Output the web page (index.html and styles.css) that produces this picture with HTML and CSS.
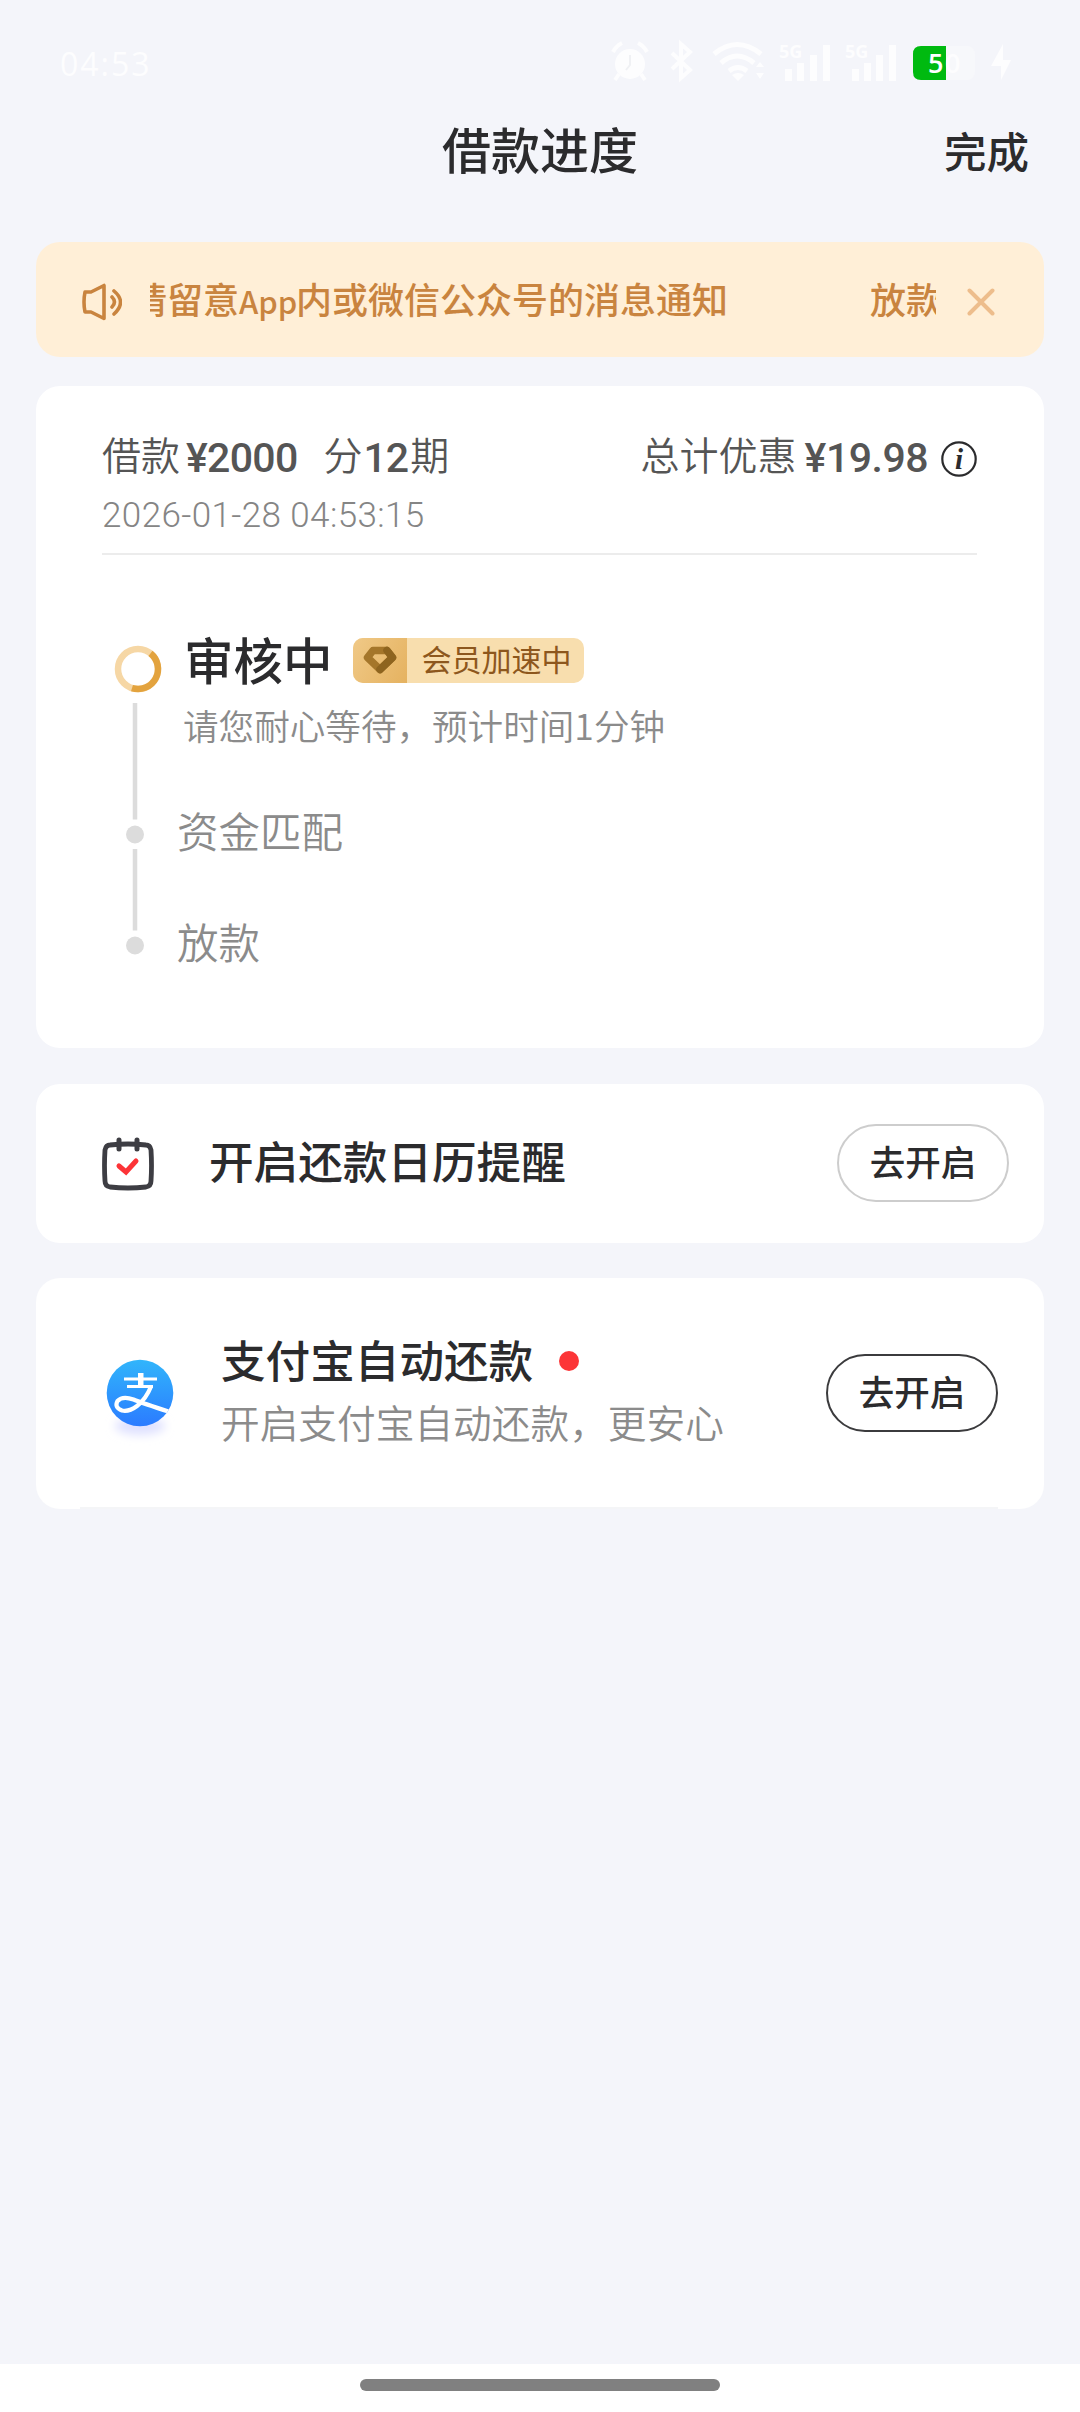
FILE: index.html
```html
<!DOCTYPE html>
<html lang="zh-CN">
<head>
<meta charset="utf-8">
<title>借款进度</title>
<link rel="stylesheet" href="styles.css">
</head>
<body>
<div class="screen">
  <div class="status">
    <span class="clock">04:53</span>
    <svg class="status-icons" width="420" height="48" viewBox="0 0 420 48" fill="#fdfdfe">
      <circle cx="20" cy="26" r="15"/>
      <path d="M9 36l-4 6M31 36l4 6M3 14q3-6 9-9M37 14q-3-6-9-9" stroke="#fdfdfe" stroke-width="4" fill="none"/>
      <path d="M20 17v10l-4 5" stroke="#f0f1f4" stroke-width="2" fill="none"/>
      <path d="M62 15l18 17-9 8V6l9 8-18 17" stroke="#fdfdfe" stroke-width="4" fill="none"/>
      <path d="M104 16q23-19 47 0M111 25q16-14 33 0M119 33q9-7 18 0" stroke="#fdfdfe" stroke-width="5" fill="none"/>
      <path d="M128 43l-6-6q6-4 12 0zM146 29l4-5 4 5zM146 35l4 6 4-6z"/>
      <path d="M175 31h7v12h-7zM187 25h7v18h-7zM200 17h7v26h-7zM213 7h7v36h-7zM242 31h7v12h-7zM254 25h7v18h-7zM266 17h7v26h-7zM279 7h7v36h-7z"/>
      <text x="169" y="20" class="net">5G</text>
      <text x="235" y="20" class="net">5G</text>
      <rect x="303" y="8" width="62" height="34" rx="8" fill="#f7f8fb"/>
      <path d="M336 8h-25q-8 0-8 8v18q0 8 8 8h25z" fill="#00ba10"/>
      <text x="318" y="35" class="charge">5<tspan dx="1.500" fill="#fdfdfe">0</tspan></text>
      <path d="M393 6l-12 22h10v14l10-20h-8z"/>
    </svg>
  </div>
  <header class="topbar">
    <h1 class="page-title">借款进度</h1>
    <span class="done">完成</span>
  </header>
  <main class="content">
    <section class="notice">
      <svg class="speaker" width="42" height="38" viewBox="0 0 42 38" fill="none" stroke="#c9843f" stroke-width="3.6" stroke-linejoin="round" stroke-linecap="round">
        <path d="M5 9h6L24 2.500v33L11 29H5q-2-10 0-20z"/>
        <path d="M32 14q5 5 0 10M34 8q13 11 0 23"/>
      </svg>
      <div class="marquee"><span class="marquee-text">请留意<span class="latin">App</span>内或微信公众号的消息通知</span><span class="marquee-next">放款</span></div>
      <svg class="close" width="28" height="28" viewBox="0 0 28 28" stroke="#edbd8c" stroke-width="4" stroke-linecap="round"><path d="M2.500 2.500l23 23M25.500 2.500l-23 23"/></svg>
    </section>

    <section class="card loan">
      <div class="summary">
        <div class="summary-row">
          <div class="amount"><span>借款</span><b class="yuan">¥2000</b><span class="term">分</span><b class="months">12</b><span>期</span></div>
          <div class="discount"><span>总计优惠</span><b class="saved">¥19.98</b>
            <svg width="38" height="38" viewBox="0 0 38 38"><circle cx="19" cy="19" r="16.700" fill="none" stroke="#2b2b2d" stroke-width="2.200"/><text x="19" y="29" class="info">i</text></svg>
          </div>
        </div>
        <div class="date">2026-01-28 04:53:15</div>
      </div>
      <div class="progress">
        <svg class="rail" width="50" height="312" viewBox="0 0 50 312">
          <circle cx="25" cy="24" r="20" fill="none" stroke="#f6d7a5" stroke-width="6.500"/>
          <path d="M37.500 8.400A20 20 0 0 1 19 43.100" fill="none" stroke="#e3a33e" stroke-width="6.500"/>
          <path d="M22 58v116.500M22 204v81.500" stroke="#dcdcdc" stroke-width="4.500"/>
          <circle cx="22" cy="189.500" r="9" fill="#dcdcdc"/><circle cx="22" cy="300.500" r="9" fill="#dcdcdc"/>
        </svg>
        <div class="steps">
          <div class="step-head">
            <span class="step-now">审核中</span>
            <span class="badge">
              <span class="badge-icon"><svg width="36" height="30" viewBox="0 0 36 30"><path d="M11 5.500h14l5.500 7L18 24.500 5.500 12.500z" fill="none" stroke="#a5762a" stroke-width="7.500" stroke-linejoin="round"/><path d="M25 5.500l5.500 7L18 24.500" fill="none" stroke="#8e641f" stroke-width="7.500" stroke-linejoin="round" stroke-linecap="round"/></svg></span>
              <span class="badge-text">会员加速中</span>
            </span>
          </div>
          <div class="step-note">请您耐心等待，预计时间1分钟</div>
          <div class="step step-match">资金匹配</div>
          <div class="step step-pay">放款</div>
        </div>
      </div>
    </section>

    <section class="card reminder">
      <svg class="calendar" width="52" height="54" viewBox="0 0 52 54" fill="none" stroke-linecap="round">
        <path d="M8 8q18-2 36 0 4 0 5 5 1 16 0 31 0 5-5 6-18 2-36 0-5-1-5-6-1-15 0-31 1-5 5-5z" stroke="#3d3d43" stroke-width="4.800"/>
        <path d="M17 3v9M35 3v9" stroke="#3d3d43" stroke-width="5"/>
        <path d="M17 29l7 6 10-11" stroke="#fc3337" stroke-width="5"/>
      </svg>
      <span class="item-title">开启还款日历提醒</span>
      <button class="open soft">去开启</button>
    </section>

    <section class="card alipay">
      <svg class="alipay-logo" width="80" height="94" viewBox="0 0 80 94">
        <defs>
          <linearGradient id="blue" x1="0" y1="0" x2="0" y2="1"><stop offset="0" stop-color="#31b5fb"/><stop offset="1" stop-color="#2b7bff"/></linearGradient>
          <filter id="soft" x="-30%" y="-80%" width="160%" height="260%"><feGaussianBlur stdDeviation="5"/></filter>
          <clipPath id="disc"><circle cx="40" cy="40" r="33.300"/></clipPath>
        </defs>
        <ellipse cx="40" cy="73" rx="25" ry="9" fill="#dfe1ff" filter="url(#soft)"/>
        <circle cx="40" cy="40" r="33.300" fill="url(#blue)"/>
        <path d="M24 26h33M27 33.500h26" stroke="#fff" stroke-width="3"/>
        <path d="M38 20h5.500v13.500H38z" fill="#fff"/>
        <path d="M51 33.500Q46 46 37 53q-8 6-15 4.500-8-3-4.500-9.500 5-5.500 16-1.500Q42 50 70 59" fill="none" stroke="#fff" stroke-width="4.200" clip-path="url(#disc)"/>
      </svg>
      <div class="item-copy">
        <div class="item-title with-dot">支付宝自动还款<i class="dot"></i></div>
        <div class="item-sub">开启支付宝自动还款，更安心</div>
      </div>
      <button class="open">去开启</button>
    </section>
  </main>
  <footer class="home"><div class="handle"></div></footer>
</div>
</body>
</html>
```
FILE: styles.css
```css
* { box-sizing: border-box; }
body { margin: 0; font-family: "Noto Sans CJK SC", sans-serif; color: #2b2b2d; background: #f4f5fa; }
.screen { width: 1080px; height: 2412px; display: flex; flex-direction: column; }

.status { height: 100px; padding: 38px 60px 0; display: flex; justify-content: space-between; }
.clock { font: 400 32px/52px "Open Sans", sans-serif; letter-spacing: 2px; color: #fdfdfe; }
.status-icons { margin-right: -10px; }
.net { font: 700 18px "Open Sans", sans-serif; }
.charge { font: 600 27px "Open Sans", sans-serif; fill: #fff; }

.topbar { height: 142px; padding: 20px 51px 0 0; display: grid; grid-template-columns: 1fr auto 1fr; align-items: start; }
.page-title { grid-column: 2; margin: 0 0 0 51px; font-size: 49px; line-height: 56px; font-weight: 500; }
.done { justify-self: end; font-size: 42.500px; line-height: 60px; font-weight: 500; }

.content { flex: 1; padding: 0 36px; display: flex; flex-direction: column; }
.notice { height: 115px; padding: 0 49px 0 44px; display: flex; align-items: center; border-radius: 24px; background: #ffefd7; color: #c9843f; font-size: 36px; line-height: 56px; }
.speaker { flex: none; margin-top: 4px; }
.marquee { flex: none; margin: 0 31px 0 28px; width: 786px; display: flex; overflow: hidden; white-space: nowrap; font-weight: 500; }
.marquee-text { margin-left: -19px; flex: none; }
.marquee-next { margin-left: 142px; flex: none; }
.latin { display: inline-block; width: 57px; font-size: 31px; }
.close { flex: none; margin-top: 4px; }

.card { border-radius: 24px; background: #fff; }
.loan { height: 662px; margin-top: 29px; padding: 40px 67px 0 66px; }
.summary { height: 129px; border-bottom: 2px solid #ececec; }
.summary-row { display: flex; justify-content: space-between; font-size: 39px; line-height: 55px; color: #555; font-weight: 350; }
.amount, .discount { display: flex; height: 56px; }
.yuan, .months, .saved { font: 500 41px/64px Roboto, sans-serif; }
.yuan { margin-left: 6px; letter-spacing: -0.7px; }
.term { margin-left: 26px; }
.months { margin: 0 2px 0 1px; letter-spacing: -1px; }
.saved { margin: 0 12px 0 8px; letter-spacing: -0.5px; }
.discount svg { margin: 14px -1px 0 0; }
.info { font: italic bold 29px "Liberation Serif", serif; text-anchor: middle; fill: #2b2b2d; }
.date { font: 300 35px/67px Roboto, sans-serif; letter-spacing: 0.4px; color: #858585; }

.progress { display: flex; padding: 90px 0 0 11px; }
.rail { flex: none; }
.steps { padding-left: 14px; display: flex; flex-direction: column; margin-top: -21px; }
.step-head { display: flex; align-items: center; height: 70px; margin-left: 7px; }
.step-now { font-size: 49.500px; line-height: 70px; font-weight: 500; }
.badge { display: flex; height: 45px; width: 231px; margin: 2px 0 0 20px; border-radius: 10px; background: #f8deae; }
.badge-icon { width: 54px; display: flex; align-items: center; justify-content: center; border-radius: 10px 0 0 10px; background: linear-gradient(120deg, #f0c987, #e5b260); }
.badge-text { padding-left: 15px; font-size: 30px; line-height: 41px; color: #8d571d; }
.step-note { margin: 3px 0 0 6px; font-size: 35.600px; line-height: 56px; font-weight: 350; color: #8b8b8b; white-space: nowrap; }
.step { font-size: 41.500px; line-height: 60px; font-weight: 350; color: #8b8b8b; }
.step-match { margin: 47px 0 51px; }

.reminder { height: 159px; margin-top: 36px; padding: 0 35px 0 66px; display: flex; align-items: center; }
.item-title { font-size: 44.600px; line-height: 60px; font-weight: 500; }
.reminder .item-title { margin: -7px auto 0 55px; }
.open { width: 172px; height: 78px; margin-top: -2px; padding: 0 0 4px; border: 2px solid #3b3b3d; border-radius: 39px; background: #fff; color: #2b2b2d; font: 500 35.500px/50px "Noto Sans CJK SC", sans-serif; }
.open.soft { border-color: #cdcdcd; }

.alipay { height: 231px; margin-top: 35px; padding: 0 46px 0 64px; display: flex; align-items: center; background: linear-gradient(#f4f5f7, #f4f5f7) 44px 100% / 918px 2px no-repeat #fff; }
.alipay-logo { margin-top: 13px; }
.item-copy { margin: -5px auto 0 41px; }
.with-dot { display: flex; align-items: center; }
.dot { width: 20px; height: 20px; margin: 4px 0 0 26px; border-radius: 50%; background: #fc3537; }
.item-sub { font-size: 38.700px; line-height: 65px; font-weight: 350; color: #8b8b8b; }

.home { height: 48px; padding-top: 15px; background: #fff; }
.handle { width: 360px; height: 12px; margin: 0 auto; border-radius: 6px; background: #808080; }
```
